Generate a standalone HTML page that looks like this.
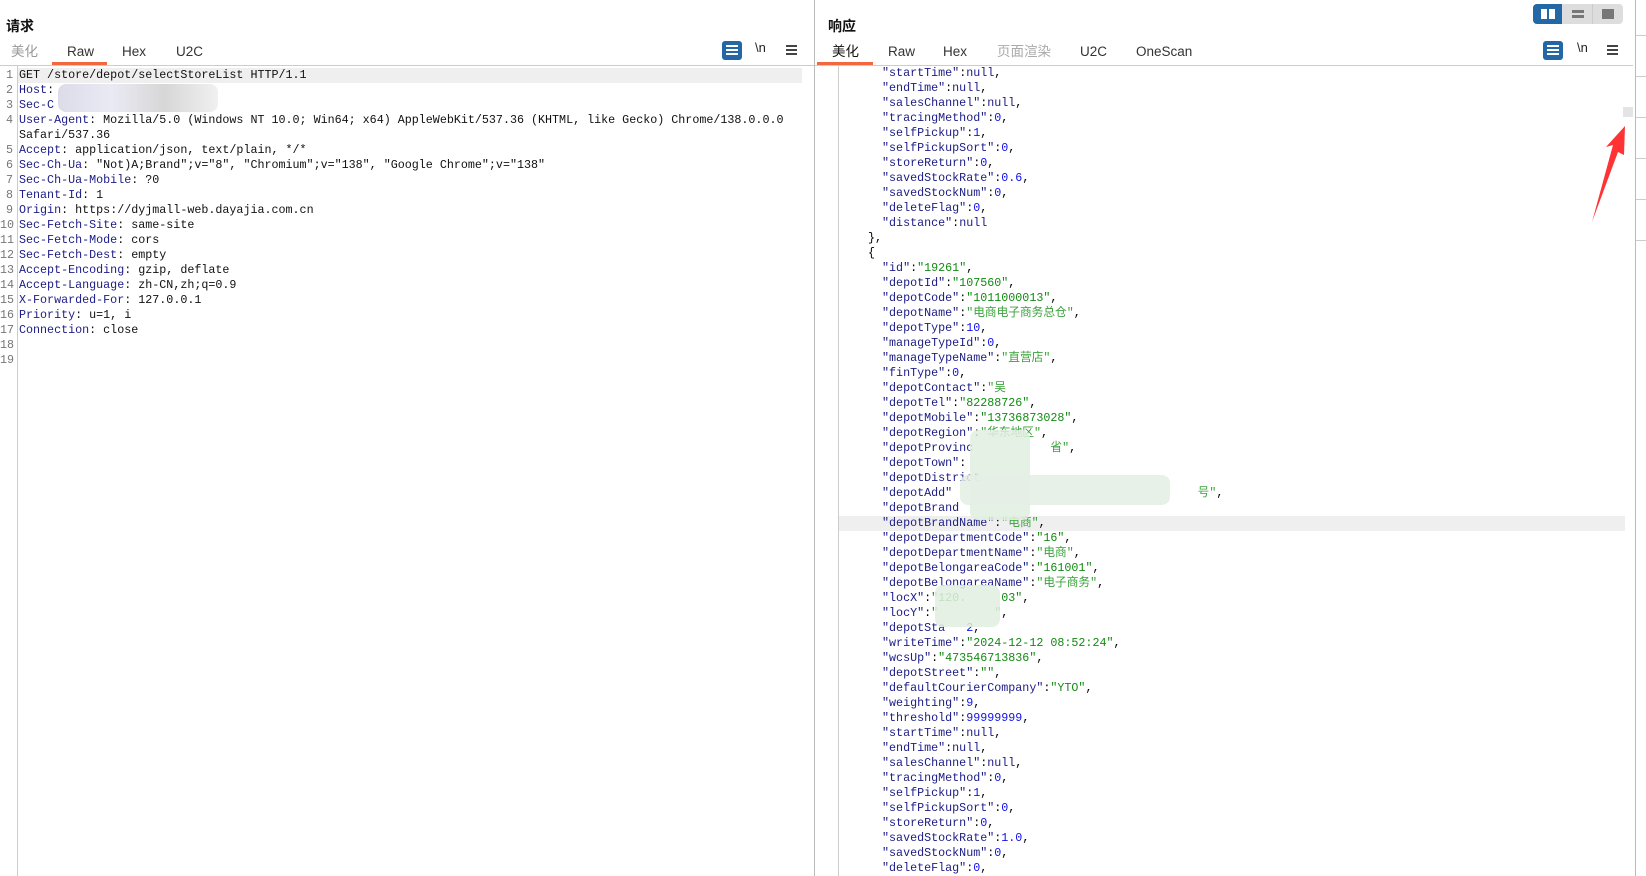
<!DOCTYPE html>
<html><head><meta charset="utf-8"><style>
*{margin:0;padding:0;box-sizing:border-box}
body{width:1646px;height:876px;background:#fff;position:relative;overflow:hidden;font-family:"Liberation Sans","Noto Sans CJK SC",sans-serif}
.abs{position:absolute}
.title{font-size:14px;font-weight:bold;color:#111;line-height:18px}
.tab{position:absolute;top:43px;font-size:13.5px;color:#333;line-height:18px;height:18px}
.code{position:absolute;font-family:"Liberation Mono","Noto Sans CJK SC",monospace;font-size:11.7px;line-height:15px;white-space:pre}
.k{color:#1c1c86}.s{color:#138a13}.c{color:#3aa23a}.n{color:#1010ee}.v{color:#111}
.ln{color:#777;text-align:right;width:13px;left:0}
.blur{position:absolute;border-radius:8px;opacity:.85}
</style></head><body>
<div class="abs title" style="left:6px;top:17px">请求</div>
<div class="tab" style="left:11px;color:#999">美化</div>
<div class="tab" style="left:67px">Raw</div>
<div class="tab" style="left:122px">Hex</div>
<div class="tab" style="left:176px">U2C</div>
<div class="abs" style="left:52px;top:62px;width:55px;height:3px;background:#f2683c"></div>
<div class="abs" style="left:0;top:65px;width:814px;height:1px;background:#ccc"></div>
<div class="abs" style="left:722px;top:41px;width:20px;height:19px;background:#2467a6;border-radius:3px"></div>
<div class="abs" style="left:726px;top:45px;width:12px;height:2px;background:#fff;box-shadow:0 4px 0 #fff,0 8px 0 #fff"></div>
<div class="abs" style="left:755px;top:40px;font-size:13px;color:#222">\n</div>
<div class="abs" style="left:786px;top:45px;width:11px;height:2px;background:#444;box-shadow:0 4px 0 #444,0 8px 0 #444"></div>
<div class="abs" style="left:17px;top:66px;width:1px;height:810px;background:#ccc"></div>
<div class="abs" style="left:18px;top:68px;width:784px;height:15px;background:#efefef"></div>
<div class="code ln" style="top:68px">1
2
3
4

5
6
7
8
9
10
11
12
13
14
15
16
17
18
19</div>
<div class="code" style="left:19px;top:68px"><span class="v">GET /store/depot/selectStoreList HTTP/1.1</span>
<span class="k">Host</span><span class="v">: </span>
<span class="k">Sec-C</span>
<span class="k">User-Agent</span><span class="v">: Mozilla/5.0 (Windows NT 10.0; Win64; x64) AppleWebKit/537.36 (KHTML, like Gecko) Chrome/138.0.0.0</span>
<span class="v">Safari/537.36</span>
<span class="k">Accept</span><span class="v">: application/json, text/plain, */*</span>
<span class="k">Sec-Ch-Ua</span><span class="v">: "Not)A;Brand";v="8", "Chromium";v="138", "Google Chrome";v="138"</span>
<span class="k">Sec-Ch-Ua-Mobile</span><span class="v">: ?0</span>
<span class="k">Tenant-Id</span><span class="v">: 1</span>
<span class="k">Origin</span><span class="v">: https://dyjmall-web.dayajia.com.cn</span>
<span class="k">Sec-Fetch-Site</span><span class="v">: same-site</span>
<span class="k">Sec-Fetch-Mode</span><span class="v">: cors</span>
<span class="k">Sec-Fetch-Dest</span><span class="v">: empty</span>
<span class="k">Accept-Encoding</span><span class="v">: gzip, deflate</span>
<span class="k">Accept-Language</span><span class="v">: zh-CN,zh;q=0.9</span>
<span class="k">X-Forwarded-For</span><span class="v">: 127.0.0.1</span>
<span class="k">Priority</span><span class="v">: u=1, i</span>
<span class="k">Connection</span><span class="v">: close</span>
</div>
<div class="blur" style="left:58px;top:84px;width:160px;height:28px;background:linear-gradient(90deg,#d6d6e6,#e6e6f2,#d0d0d0,#eee)"></div>

<div class="abs" style="left:814px;top:0;width:1px;height:876px;background:#bbb"></div>
<div class="abs title" style="left:828px;top:17px">响应</div>
<div class="tab" style="left:832px;color:#111">美化</div>
<div class="tab" style="left:888px">Raw</div>
<div class="tab" style="left:943px">Hex</div>
<div class="tab" style="left:997px;color:#aaa">页面渲染</div>
<div class="tab" style="left:1080px">U2C</div>
<div class="tab" style="left:1136px">OneScan</div>
<div class="abs" style="left:817px;top:62px;width:56px;height:3px;background:#f2683c"></div>
<div class="abs" style="left:815px;top:65px;width:818px;height:1px;background:#ccc"></div>
<div class="abs" style="left:1543px;top:41px;width:20px;height:19px;background:#2467a6;border-radius:3px"></div>
<div class="abs" style="left:1547px;top:45px;width:12px;height:2px;background:#fff;box-shadow:0 4px 0 #fff,0 8px 0 #fff"></div>
<div class="abs" style="left:1577px;top:40px;font-size:13px;color:#222">\n</div>
<div class="abs" style="left:1607px;top:45px;width:11px;height:2px;background:#444;box-shadow:0 4px 0 #444,0 8px 0 #444"></div>
<div class="abs" style="left:1533px;top:4px;width:90px;height:20px;background:#ddd;border-radius:4px;overflow:hidden">
 <div class="abs" style="left:0;top:0;width:29px;height:20px;background:#2467a6"></div>
 <div class="abs" style="left:8px;top:5px;width:6px;height:10px;background:#fff"></div>
 <div class="abs" style="left:16px;top:5px;width:6px;height:10px;background:#fff"></div>
 <div class="abs" style="left:39px;top:6px;width:12px;height:3px;background:#777;box-shadow:0 5px 0 #777"></div>
 <div class="abs" style="left:59px;top:0;width:1px;height:20px;background:#ccc"></div>
 <div class="abs" style="left:69px;top:5px;width:12px;height:10px;background:#777"></div>
</div>
<div class="abs" style="left:838px;top:66px;width:1px;height:810px;background:#ccc"></div>
<div class="abs" style="left:839px;top:516px;width:786px;height:15px;background:#efefef"></div>
<div class="abs" style="left:1635px;top:0;width:1px;height:876px;background:#bbb"></div>
<div class="abs" style="left:1636px;top:35px;width:10px;height:1px;background:#ccc;box-shadow:0 41px 0 #ccc,0 82px 0 #ccc,0 123px 0 #ccc,0 164px 0 #ccc,0 205px 0 #ccc"></div>
<div class="abs" style="left:1623px;top:107px;width:10px;height:10px;background:#e4e4e4"></div>
<svg class="abs" style="left:1585px;top:120px" width="50" height="110"><polygon points="7,102 28,25 21,27 40,6 39,35 33,32" fill="#f33"/></svg>

<div class="code" style="left:868px;top:66px"><span class="k">  "startTime"</span>:<span class="k">null</span>,
<span class="k">  "endTime"</span>:<span class="k">null</span>,
<span class="k">  "salesChannel"</span>:<span class="k">null</span>,
<span class="k">  "tracingMethod"</span>:<span class="n">0</span>,
<span class="k">  "selfPickup"</span>:<span class="n">1</span>,
<span class="k">  "selfPickupSort"</span>:<span class="n">0</span>,
<span class="k">  "storeReturn"</span>:<span class="n">0</span>,
<span class="k">  "savedStockRate"</span>:<span class="n">0.6</span>,
<span class="k">  "savedStockNum"</span>:<span class="n">0</span>,
<span class="k">  "deleteFlag"</span>:<span class="n">0</span>,
<span class="k">  "distance"</span>:<span class="k">null</span>
},
{
<span class="k">  "id"</span>:<span class="s">"19261"</span>,
<span class="k">  "depotId"</span>:<span class="s">"107560"</span>,
<span class="k">  "depotCode"</span>:<span class="s">"1011000013"</span>,
<span class="k">  "depotName"</span>:<span class="c">"电商电子商务总仓"</span>,
<span class="k">  "depotType"</span>:<span class="n">10</span>,
<span class="k">  "manageTypeId"</span>:<span class="n">0</span>,
<span class="k">  "manageTypeName"</span>:<span class="c">"直营店"</span>,
<span class="k">  "finType"</span>:<span class="n">0</span>,
<span class="k">  "depotContact"</span>:<span class="c">"吴</span>
<span class="k">  "depotTel"</span>:<span class="s">"82288726"</span>,
<span class="k">  "depotMobile"</span>:<span class="s">"13736873028"</span>,
<span class="k">  "depotRegion"</span>:<span class="c">"华东地区"</span>,
<span class="k">  "depotProvinc</span>           <span class="c">省"</span>,
<span class="k">  "depotTown"</span>:
<span class="k">  "depotDistrict</span>
<span class="k">  "depotAdd"</span>                                   <span class="c">号"</span>,
<span class="k">  "depotBrand</span>
<span class="k">  "depotBrandName"</span>:<span class="c">"电商"</span>,
<span class="k">  "depotDepartmentCode"</span>:<span class="s">"16"</span>,
<span class="k">  "depotDepartmentName"</span>:<span class="c">"电商"</span>,
<span class="k">  "depotBelongareaCode"</span>:<span class="s">"161001"</span>,
<span class="k">  "depotBelongareaName"</span>:<span class="c">"电子商务"</span>,
<span class="k">  "locX"</span>:<span class="s">"120.     03"</span>,
<span class="k">  "locY"</span>:<span class="s">"        "</span>,
<span class="k">  "depotSta</span>   <span class="n">2</span>,
<span class="k">  "writeTime"</span>:<span class="s">"2024-12-12 08:52:24"</span>,
<span class="k">  "wcsUp"</span>:<span class="s">"473546713836"</span>,
<span class="k">  "depotStreet"</span>:<span class="s">""</span>,
<span class="k">  "defaultCourierCompany"</span>:<span class="s">"YTO"</span>,
<span class="k">  "weighting"</span>:<span class="n">9</span>,
<span class="k">  "threshold"</span>:<span class="n">99999999</span>,
<span class="k">  "startTime"</span>:<span class="k">null</span>,
<span class="k">  "endTime"</span>:<span class="k">null</span>,
<span class="k">  "salesChannel"</span>:<span class="k">null</span>,
<span class="k">  "tracingMethod"</span>:<span class="n">0</span>,
<span class="k">  "selfPickup"</span>:<span class="n">1</span>,
<span class="k">  "selfPickupSort"</span>:<span class="n">0</span>,
<span class="k">  "storeReturn"</span>:<span class="n">0</span>,
<span class="k">  "savedStockRate"</span>:<span class="n">1.0</span>,
<span class="k">  "savedStockNum"</span>:<span class="n">0</span>,
<span class="k">  "deleteFlag"</span>:<span class="n">0</span>,</div>
<div class="blur" style="left:970px;top:430px;width:60px;height:90px;background:#e2eee2"></div>
<div class="blur" style="left:960px;top:475px;width:210px;height:30px;background:#e4efe4"></div>
<div class="blur" style="left:935px;top:585px;width:65px;height:42px;background:#e2eee2"></div>
</body></html>
